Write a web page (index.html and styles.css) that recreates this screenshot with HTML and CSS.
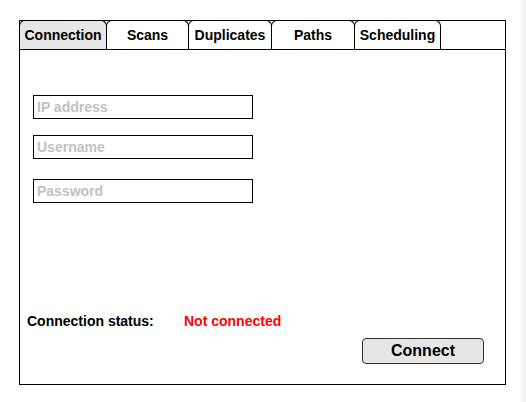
FILE: index.html
```html
<!DOCTYPE html>
<html>
<head>
<meta charset="utf-8">
<link rel="stylesheet" href="styles.css">
</head>
<body>
<div class="page">
  <div class="frame">
    <div class="tabs">
      <div class="tab active t1">Connection</div>
      <div class="tab t2">Scans</div>
      <div class="tab t3">Duplicates</div>
      <div class="tab t4">Paths</div>
      <div class="tab t5">Scheduling</div>
    </div>
    <div class="panel">
      <div class="fields">
        <input class="field f-ip" type="text" placeholder="IP address">
        <input class="field f-user" type="text" placeholder="Username">
        <input class="field f-pass" type="password" placeholder="Password">
      </div>
      <div class="status">
        <span class="status-label">Connection status:</span>
        <span class="status-value">Not connected</span>
      </div>
      <div class="actions">
        <button class="btn">Connect</button>
      </div>
    </div>
  </div>
  <div class="edge"></div>
</div>
</body>
</html>
```
FILE: styles.css
```css
html, body {
  margin: 0;
  padding: 0;
  background: #fff;
}
body {
  font-family: "Liberation Sans", Arial, sans-serif;
  font-weight: bold;
  font-size: 14px;
  color: #000;
}
.page {
  display: flex;
  height: 402px;
  width: 526px;
}
.frame {
  margin: 20px 0 0 19px;
  width: 487px;
  height: 365px;
  box-sizing: border-box;
  border: 1px solid #000;
  display: flex;
  flex-direction: column;
}
.edge {
  margin-left: auto;
  width: 6px;
  background: linear-gradient(to right, #fbfbfb, #f0f0f0);
}
.tabs {
  display: flex;
  margin: -1px 0 0 -1px;
  border-bottom: 1px solid #000;
  height: 29px;
}
.tab {
  box-sizing: border-box;
  height: 29px;
  border: 1px solid #000;
  border-bottom: none;
  border-radius: 6px 6px 0 0;
  display: flex;
  align-items: center;
  justify-content: center;
  margin-left: -1px;
}
.tab.t1 { margin-left: 0; width: 88px; }
.tab.t2 { width: 83px; }
.tab.t3 { width: 84px; }
.tab.t4 { width: 84px; }
.tab.t5 { width: 87px; }
.tab.active {
  background: #e6e6e6;
}
.panel {
  flex: 1;
  display: flex;
  flex-direction: column;
}
.fields {
  display: flex;
  flex-direction: column;
  padding: 45px 0 0 13px;
}
.field {
  box-sizing: border-box;
  width: 220px;
  height: 24px;
  border: 1px solid #000;
  border-radius: 0;
  margin: 0;
  padding: 0 3px;
  font-family: "Liberation Sans", Arial, sans-serif;
  font-weight: bold;
  font-size: 14px;
  outline: none;
  background: #fff;
}
.field::placeholder {
  color: #c2c2c2;
  opacity: 1;
}
.f-user { margin-top: 16px; }
.f-pass { margin-top: 20px; }
.status {
  margin-top: auto;
  display: flex;
  align-items: center;
  height: 16px;
  line-height: 16px;
  padding-left: 7px;
}
.status-label {
  width: 157px;
}
.status-value {
  color: #ff0000;
}
.actions {
  display: flex;
  justify-content: flex-end;
  padding: 9px 21px 20px 0;
}
.btn {
  box-sizing: border-box;
  width: 122px;
  height: 26px;
  border: 1px solid #333;
  border-radius: 4px;
  background: #e6e6e6;
  font-family: "Liberation Sans", Arial, sans-serif;
  font-weight: bold;
  font-size: 16px;
  color: #000;
  padding: 0;
}
```
